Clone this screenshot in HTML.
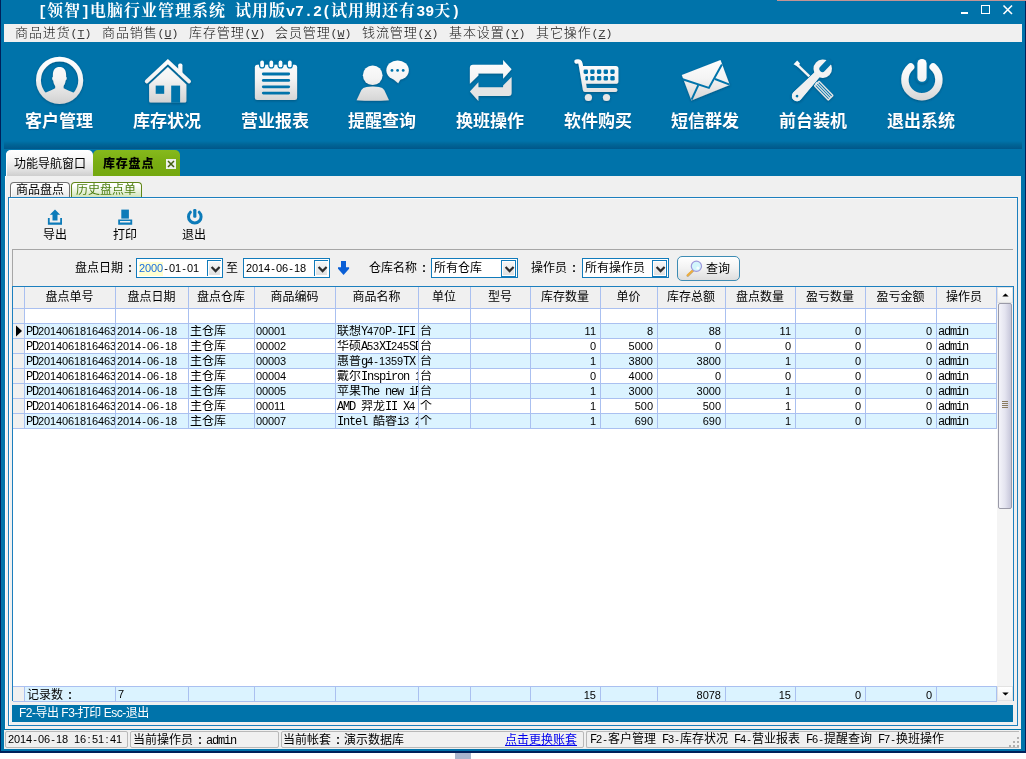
<!DOCTYPE html>
<html lang="zh-CN">
<head>
<meta charset="utf-8">
<title>[领智]电脑行业管理系统</title>
<style>
html,body{margin:0;padding:0;}
body{width:1026px;height:759px;overflow:hidden;background:#fff;position:relative;
  font-family:"Liberation Sans","Noto Sans CJK SC",sans-serif;font-size:12px;color:#000;line-height:1;}
.abs,#win div,#win svg,#menubar span{position:absolute;}
.c{padding:0 4px 0 5px;font-weight:bold;font-family:"Liberation Sans",sans-serif;letter-spacing:0}
#win{position:absolute;left:0;top:0;width:1026px;height:753px;background:#0073aa;overflow:hidden;will-change:transform;}
.t{white-space:nowrap;}
.mono{font-family:"Liberation Mono","Noto Sans CJK SC",monospace;font-size:12px;}
.l{font-family:"Liberation Mono",monospace;font-size:12px;letter-spacing:-1.2px;line-height:1px;}
.d{font-family:"Liberation Sans",sans-serif;font-size:11px;letter-spacing:-0.12px;line-height:1px;}
.p{padding:0 1.2px 0 1.26px;white-space:pre;}
.q{padding:0 1.5px 0 1.56px;white-space:pre;}
/* title */
#title{left:38px;top:1px;height:20px;line-height:20px;color:#fff;font-weight:bold;font-size:16px;letter-spacing:1px;
  font-family:"Liberation Serif","Noto Serif CJK SC",serif;}
#title i{font-style:normal;font-family:"Liberation Mono",monospace;font-size:15px;letter-spacing:0;}
/* menubar */
#menubar{left:4px;top:24px;width:1018px;height:18px;background:#f0f0f0;}
#menubar b{font-weight:normal;font-family:"Liberation Mono",monospace;font-size:11.5px;letter-spacing:0;color:#333}
#menubar span{top:0;height:18px;line-height:18px;font-size:13px;letter-spacing:0.9px;color:#111;white-space:nowrap;font-weight:300;}
/* toolbar */
.tbl{top:111px;width:108px;height:22px;line-height:22px;text-align:center;color:#fff;font-weight:bold;font-size:17px;
  font-family:"Liberation Sans","Noto Sans CJK SC",sans-serif;text-shadow:0 1px 1px rgba(0,40,80,.35);}
#shadow{left:4px;top:141px;width:1018px;height:8px;background:linear-gradient(#0073aa,#006698 40%,#00578a);}
/* content */
#content{left:4px;top:176px;width:1017px;height:553px;background:#f0f0f0;}
#statusbar{left:4px;top:730px;width:1017px;height:19px;background:#f0f0f0;}
.sp{top:1px;height:15px;border:1px solid #b8b8b8;border-radius:2px;line-height:15px;}
.hdr{height:21px;line-height:21px;text-align:center;}
.cell{height:15px;line-height:15px;white-space:nowrap;overflow:hidden;}
.num{text-align:right;font-size:11px;}
.ddb{width:13px;height:15px;border-left:1px solid #117bbb;border-top:1px solid #117bbb;background:#fff;}
.cb{border-right:1px solid #117bbb;border-bottom:1px solid #117bbb;}
.ddb i{position:absolute;left:1px;top:1px;width:11px;height:13px;background:linear-gradient(#f6f6f6,#e0e0e0);}
</style>
</head>
<body>
<div id="win">
  <div style="left:0;top:0;width:1px;height:753px;background:#00205a"></div>
  <div style="left:1025px;top:0;width:1px;height:753px;background:#00205a"></div>
  <div style="left:0;top:751px;width:1026px;height:2px;background:#00205a"></div>

  <div style="left:777px;top:0;width:249px;height:1px;background:#c29494"></div>
  <div id="title" class="t"><i>[</i>领智<i>]</i>电脑行业管理系统<i>&nbsp;</i>试用版<i>v7.2(</i>试用期还有<i>39</i>天<i>)</i></div>
  <!-- window buttons -->
  <div style="left:961px;top:12px;width:7px;height:2px;background:#fff"></div>
  <div style="left:981px;top:5px;width:7px;height:7px;border:1px solid #fff"></div>
  <svg style="left:1002px;top:4px" width="12" height="12" viewBox="0 0 12 12"><path d="M1.5 1.5 L10 10 M10 1.5 L1.5 10" stroke="#fff" stroke-width="1.6" fill="none"/></svg>

  <div id="menubar">
    <span style="left:11px">商品进货<b>(<u>T</u>)</b></span>
    <span style="left:98px">商品销售<b>(<u>U</u>)</b></span>
    <span style="left:185px">库存管理<b>(<u>V</u>)</b></span>
    <span style="left:271px">会员管理<b>(<u>W</u>)</b></span>
    <span style="left:358px">钱流管理<b>(<u>X</u>)</b></span>
    <span style="left:445px">基本设置<b>(<u>Y</u>)</b></span>
    <span style="left:532px">其它操作<b>(<u>Z</u>)</b></span>
  </div>

  <div id="shadow"></div>

  <svg style="left:0;top:0" width="1026" height="150" viewBox="0 0 1026 150">
  <defs>
    <linearGradient id="g" gradientUnits="userSpaceOnUse" x1="0" y1="58" x2="0" y2="103">
      <stop offset="0" stop-color="#ffffff"/><stop offset="0.45" stop-color="#f4f4f4"/><stop offset="1" stop-color="#d2d2d2"/>
    </linearGradient>
    <clipPath id="c1"><circle cx="59.6" cy="80.3" r="20"/></clipPath>
    <filter id="sh" x="-10%" y="-10%" width="120%" height="130%">
      <feDropShadow dx="0" dy="1" stdDeviation="0.8" flood-color="#003355" flood-opacity="0.45"/>
    </filter>
  </defs>
  <g filter="url(#sh)">
  <!-- 1 user -->
  <circle cx="59.6" cy="80.3" r="21.15" fill="none" stroke="url(#g)" stroke-width="4.9"/>
  <path clip-path="url(#c1)" fill="url(#g)" d="M52.9 75 C52.9 69.6 55.6 67 59.5 67 C63.4 67 66.1 69.6 66.1 75 L66.1 77 Q66.9 77.2 66.7 78.6 Q66.4 80.4 65.6 80.6 C65.2 83.4 64.4 85 63.6 86 L63.6 88.2 C66 89.6 70 91 75 93.2 L78 104 L41 104 L44.2 93.2 C49 91 53 89.6 55.2 88.2 L55.2 86 C54.4 85 53.6 83.4 53.2 80.6 Q52.4 80.4 52.2 78.6 Q52 77.2 52.9 77 Z"/>
  <!-- 2 house -->
  <rect x="178.2" y="63.6" width="4.2" height="11" rx="1.6" fill="url(#g)"/>
  <polyline points="146.8,81.4 167.9,61.6 189,81.4" fill="none" stroke="url(#g)" stroke-width="3.9" stroke-linecap="round" stroke-linejoin="miter"/>
  <path d="M149.1 84.5 L167.9 67 L186.4 84.5 L186.4 101 Q186.4 102.6 184.8 102.6 L150.7 102.6 Q149.1 102.6 149.1 101 Z" fill="url(#g)"/>
  <rect x="155.7" y="85.6" width="8.5" height="8.2" fill="#0073aa"/>
  <rect x="171.2" y="85.6" width="8.9" height="17.2" fill="#0073aa"/>
  <!-- 3 notepad -->
  <rect x="254.9" y="64.7" width="42.2" height="35.3" rx="2.5" fill="url(#g)"/>
  <g fill="#0073aa"><rect x="259.0" y="59.4" width="6.2" height="9.2" rx="3.1"/><rect x="268.2" y="59.4" width="6.2" height="9.2" rx="3.1"/><rect x="277.4" y="59.4" width="6.2" height="9.2" rx="3.1"/><rect x="286.7" y="59.4" width="6.2" height="9.2" rx="3.1"/></g>
  <g fill="#ffffff"><rect x="260.25" y="60.6" width="3.7" height="6.7" rx="1.85"/><rect x="269.45" y="60.6" width="3.7" height="6.7" rx="1.85"/><rect x="278.65" y="60.6" width="3.7" height="6.7" rx="1.85"/><rect x="287.95" y="60.6" width="3.7" height="6.7" rx="1.85"/></g>
  <g fill="#0073aa"><rect x="261.9" y="72.6" width="28.2" height="2.8" rx="1.4"/><rect x="261.9" y="79.0" width="28.2" height="2.8" rx="1.4"/><rect x="261.9" y="85.4" width="28.2" height="2.8" rx="1.4"/><rect x="261.9" y="91.7" width="28.2" height="2.8" rx="1.4"/></g>
  <!-- 4 remind -->
  <circle cx="372.7" cy="75.3" r="9.8" fill="url(#g)"/>
  <path d="M356.6 100.2 L361.4 90 Q362.8 87.6 366.6 87 Q372.8 85.8 379 87 Q382.8 87.6 384.2 90 L389 100.2 Q372.8 101.4 356.6 100.2 Z" fill="url(#g)"/>
  <ellipse cx="397.6" cy="70.2" rx="11.2" ry="9.8" fill="url(#g)"/>
  <polygon points="392.5,78.4 398.2,83.2 401.6,77.6" fill="url(#g)"/>
  <g fill="#0073aa"><circle cx="392" cy="70.4" r="1.4"/><circle cx="397.6" cy="70.4" r="1.4"/><circle cx="403.2" cy="70.4" r="1.4"/></g>
  <!-- 5 swap -->
  <path fill="url(#g)" d="M469.9 83.8 L469.9 67.8 Q469.9 64.8 472.9 64.8 L503.1 64.8 L503.1 60 L511.6 69.3 L503.1 78.7 L503.1 73.6 L478.4 73.6 L478.4 75.5 Z"/>
  <path fill="#e4e4e4" transform="rotate(180 490.75 80.45)" d="M469.9 83.8 L469.9 67.8 Q469.9 64.8 472.9 64.8 L503.1 64.8 L503.1 60 L511.6 69.3 L503.1 78.7 L503.1 73.6 L478.4 73.6 L478.4 75.5 Z"/>
  <!-- 6 cart -->
  <path fill="none" stroke="url(#g)" stroke-width="4.2" stroke-linecap="round" stroke-linejoin="round" d="M576.4 61.6 Q580 60.4 580.6 64 L585 90 L615.4 90"/>
  <path fill="url(#g)" d="M581.6 66 L615.8 66 Q618.4 66 618.4 68.6 L618.4 81.2 Q618.4 83.8 615.8 83.8 L584.4 83.8 Z"/>
  <g fill="#0073aa"><rect x="583.6" y="69.5" width="4.4" height="4.4" rx="1.3"/><rect x="590.2" y="69.5" width="4.4" height="4.4" rx="1.3"/><rect x="596.9" y="69.5" width="4.4" height="4.4" rx="1.3"/><rect x="603.6" y="69.5" width="4.4" height="4.4" rx="1.3"/><rect x="610.3" y="69.5" width="4.4" height="4.4" rx="1.3"/><rect x="585.4" y="76.1" width="2.6" height="4.4" rx="1.3"/><rect x="590.2" y="76.1" width="4.4" height="4.4" rx="1.3"/><rect x="596.9" y="76.1" width="4.4" height="4.4" rx="1.3"/><rect x="603.6" y="76.1" width="4.4" height="4.4" rx="1.3"/><rect x="610.3" y="76.1" width="4.4" height="4.4" rx="1.3"/></g>
  <circle cx="588.4" cy="97.5" r="3.6" fill="#e6e6e6"/><circle cx="606.5" cy="97.5" r="3.6" fill="#e6e6e6"/>
  <!-- 7 envelope -->
  <polygon points="681.8,74.9 720.5,60.1 729.8,85.1 691.4,100.5" fill="url(#g)"/>
  <polyline points="682.6,79.2 708.9,87.9 721.9,64.4" fill="none" stroke="#0073aa" stroke-width="2"/>
  <polyline points="698.3,85.1 691.6,99.6" fill="none" stroke="#0073aa" stroke-width="2"/>
  <polyline points="715,79 729.6,84.6" fill="none" stroke="#0073aa" stroke-width="2"/>
  <!-- 8 tools -->
  <g>
    <polygon points="793.6,64.2 797.2,60.6 800,63.6 798,66.8" fill="#fbfbfb"/>
    <line x1="797.4" y1="64.8" x2="816.4" y2="83.2" stroke="#f6f6f6" stroke-width="2.3"/>
    <g transform="translate(823.7 90.65) rotate(46)">
      <rect x="-10.6" y="-3.9" width="21.2" height="7.8" rx="1" fill="#e6e6e6"/>
      <rect x="-9.2" y="-2.55" width="18.4" height="0.95" fill="#0073aa"/>
      <rect x="-9.2" y="-0.48" width="18.4" height="0.95" fill="#0073aa"/>
      <rect x="-9.2" y="1.6" width="18.4" height="0.95" fill="#0073aa"/>
    </g>
    <g transform="translate(797 96.1) rotate(-46.8)">
      <path d="M0 -5.1 L30 -3.4 L30 3.4 L0 5.1 A5.1 5.1 0 0 1 0 -5.1 Z" fill="#efefef" stroke="#0073aa" stroke-width="1.4" paint-order="stroke"/>
      <circle cx="37.6" cy="0" r="9.2" fill="#f3f3f3"/>
      <path d="M0 -5.1 L30 -3.4 L30 3.4 L0 5.1 A5.1 5.1 0 0 1 0 -5.1 Z" fill="#efefef"/>
      <path d="M37.2 -3.1 L49 -3.1 L49 3.1 L37.2 3.1 A3.1 3.1 0 0 1 37.2 -3.1 Z" fill="#0073aa"/>
      <circle cx="0" cy="0" r="1.35" fill="#0073aa"/>
    </g>
  </g>
  <!-- 9 power -->
  <path d="M910.6 67 A17 17 0 1 0 933.2 67" fill="none" stroke="url(#g)" stroke-width="7.4" stroke-linecap="round"/>
  <rect x="915.8" y="57.4" width="12.4" height="26" rx="6" fill="#0073aa"/>
  <rect x="917.4" y="59" width="9.2" height="22.8" rx="4.4" fill="url(#g)"/>
  </g>
</svg>


  <div class="tbl" style="left:5px">客户管理</div>
  <div class="tbl" style="left:113px">库存状况</div>
  <div class="tbl" style="left:221px">营业报表</div>
  <div class="tbl" style="left:328px">提醒查询</div>
  <div class="tbl" style="left:436px">换班操作</div>
  <div class="tbl" style="left:544px">软件购买</div>
  <div class="tbl" style="left:651px">短信群发</div>
  <div class="tbl" style="left:759px">前台装机</div>
  <div class="tbl" style="left:867px">退出系统</div>

    <div style="left:6px;top:150px;width:87px;height:26px;border-radius:5px 5px 0 0;background:linear-gradient(#ffffff,#f5f5f5 40%,#e2e2e2 75%,#cecece);box-shadow:inset 1px 0 0 #fff"></div>
  <div class="t" style="left:14px;top:157px;height:14px;line-height:14px;font-size:12px">功能导航窗口</div>
  <div style="left:93px;top:150px;width:87px;height:26px;border-radius:5px 5px 0 0;background:linear-gradient(#86b91c,#79ad12 50%,#74a810)"></div>
  <div class="t" style="left:103px;top:157px;height:14px;line-height:14px;font-size:12px;font-weight:900;letter-spacing:0.8px">库存盘点</div>
  <div style="left:166px;top:159px;width:10px;height:10px;background:#eef1ea"></div>
  <svg style="left:166px;top:159px" width="10" height="10" viewBox="0 0 10 10"><path d="M2 2 L8 8 M8 2 L2 8" stroke="#44600f" stroke-width="1.5" fill="none"/></svg>


  <div id="content">
      <div style="left:0;top:0;width:1px;height:553px;background:#0073aa"></div>
    <div style="left:1px;top:0;width:1px;height:553px;background:#fafafa"></div>
    <!-- sub tabs -->
    <div style="left:6px;top:6px;width:58px;height:16px;border:1px solid #707070;border-bottom:none;border-radius:4px 4px 0 0;background:linear-gradient(#ffffff,#f4f4f4 50%,#e4e4e4);box-shadow:inset 1px 1px 0 #fff"></div>
    <div class="t" style="left:12px;top:7px;height:14px;line-height:14px">商品盘点</div>
    <div style="left:67px;top:6px;width:69px;height:15px;border:1px solid #5f8516;border-bottom:none;border-radius:4px 4px 0 0;background:linear-gradient(#ffffff 15%,#e6f1d8 60%,#cfe4b4)"></div>
    <div class="t" style="left:72px;top:7px;height:14px;line-height:14px;color:#4c7d10">历史盘点单</div>
    <!-- panel -->
    <div style="left:4px;top:21px;width:1008px;height:527px;border:1px solid #1c7fbe;background:#f0f0f0;box-shadow:inset 1px 1px 0 #fbfbfb"></div>
    <!-- inner toolbar -->
    <svg style="left:40px;top:32px" width="180" height="18" viewBox="40 32 180 18">
      <g fill="#0c7bb9">
        <!-- export -->
        <path d="M51 33.4 L56.2 38.8 L53.5 38.8 L53.5 44.6 L48.5 44.6 L48.5 38.8 L45.8 38.8 Z"/>
        <path d="M43.9 42 L45.7 42 L45.7 46.4 L56.2 46.4 L56.2 42 L58 42 L58 48.7 L43.9 48.7 Z"/>
        <!-- print -->
        <rect x="117.3" y="33.6" width="7.6" height="9"/>
        <path d="M114.2 43.4 L128.2 43.4 L128.2 48.8 L114.2 48.8 Z M116 45 L116 46.6 L126.4 46.6 L126.4 45 Z" fill-rule="evenodd"/>
        <!-- exit -->
        <rect x="189.2" y="33" width="3.2" height="8.8" rx="1.2"/>
      </g>
      <path d="M186.4 36.2 A6.3 6.3 0 1 0 195.2 36.2" fill="none" stroke="#0c7bb9" stroke-width="3" stroke-linecap="round"/>
    </svg>
    <div class="t" style="left:39px;top:52px;height:14px;line-height:14px">导出</div>
    <div class="t" style="left:109px;top:52px;height:14px;line-height:14px">打印</div>
    <div class="t" style="left:178px;top:52px;height:14px;line-height:14px">退出</div>
    <!-- filter panel -->
    <div style="left:8px;top:73px;width:1001px;height:38px;border-top:1px solid #a6a6a6;border-left:1px solid #a6a6a6;box-sizing:border-box"></div>
    <div class="t" style="left:71px;top:85px;height:14px;line-height:14px">盘点日期<span class="c">:</span></div>
    <div style="left:132px;top:82px;width:85px;height:18px;border:1px solid #117bbb;background:#fff"></div>
    <div class="t mono" style="left:135px;top:86px;height:14px;line-height:14px"><span style="background:#ffffd0;color:#1a6ee0"><span class="d">2000</span></span><span class="d p">-</span><span class="d">01</span><span class="d p">-</span><span class="d">01</span></div>
    <div class="ddb" style="left:203px;top:84px"><i></i><svg style="left:0;top:0" width="14" height="16" viewBox="0 0 14 16"><path d="M3.6 6 L7.6 10.1 L11.6 6" stroke="#2c2c2c" stroke-width="2.2" fill="none"/></svg></div>
    <div class="t" style="left:222px;top:85px;height:14px;line-height:14px">至</div>
    <div style="left:239px;top:82px;width:85px;height:18px;border:1px solid #117bbb;background:#fff"></div>
    <div class="t mono" style="left:242px;top:86px;height:14px;line-height:14px"><span class="d">2014</span><span class="d p">-</span><span class="d">06</span><span class="d p">-</span><span class="d">18</span></div>
    <div class="ddb" style="left:310px;top:84px"><i></i><svg style="left:0;top:0" width="14" height="16" viewBox="0 0 14 16"><path d="M3.6 6 L7.6 10.1 L11.6 6" stroke="#2c2c2c" stroke-width="2.2" fill="none"/></svg></div>
    <svg style="left:333px;top:85px" width="13" height="15" viewBox="0 0 13 15"><path d="M4 0 L9 0 L9 6.2 L12.1 6.2 L12.1 7.8 L6.55 14 L1 7.8 L1 6.2 L4 6.2 Z" fill="#0a5fd6"/></svg>
    <div class="t" style="left:365px;top:85px;height:14px;line-height:14px">仓库名称<span class="c">:</span></div>
    <div style="left:427px;top:82px;width:85px;height:18px;border:1px solid #117bbb;background:#fff"></div>
    <div class="t" style="left:430px;top:85px;height:14px;line-height:14px">所有仓库</div>
    <div class="ddb cb" style="left:497px;top:84px"><i></i><svg style="left:0;top:0" width="14" height="16" viewBox="0 0 14 16"><path d="M3.6 6 L7.6 10.1 L11.6 6" stroke="#2c2c2c" stroke-width="2.2" fill="none"/></svg></div>
    <div class="t" style="left:527px;top:85px;height:14px;line-height:14px">操作员<span class="c">:</span></div>
    <div style="left:578px;top:82px;width:85px;height:18px;border:1px solid #117bbb;background:#fff"></div>
    <div class="t" style="left:581px;top:85px;height:14px;line-height:14px">所有操作员</div>
    <div class="ddb cb" style="left:648px;top:84px"><i></i><svg style="left:0;top:0" width="14" height="16" viewBox="0 0 14 16"><path d="M3.6 6 L7.6 10.1 L11.6 6" stroke="#2c2c2c" stroke-width="2.2" fill="none"/></svg></div>
    <!-- query button -->
    <div style="left:673px;top:80px;width:61px;height:23px;border:1px solid #3d8cb4;border-radius:5px;background:linear-gradient(#ffffff,#f2f2f2 50%,#dedede)"></div>
    <svg style="left:681px;top:83px" width="18" height="18" viewBox="0 0 18 18">
      <path d="M8.2 11.4 L2.8 16.6" stroke="#8a6a30" stroke-width="2.6" stroke-linecap="round" opacity="0.5"/>
      <path d="M8 11.2 L2.6 16.2" stroke="#efae3c" stroke-width="1.9" stroke-linecap="round"/>
      <circle cx="11.4" cy="7.3" r="5.1" fill="#d2f5fc" stroke="#9c98dc" stroke-width="1.2"/>
      <circle cx="12.8" cy="9" r="1.5" fill="#ffffff" opacity="0.8"/>
    </svg>
    <div class="t" style="left:702px;top:86px;height:14px;line-height:14px">查询</div>
    <div style="left:8px;top:110px;width:1002px;height:415px;background:#fff;border:1px solid #1c7fbe;box-sizing:border-box"></div>
<div style="left:9px;top:111px;width:984px;height:21px;background:#f0f0f0"></div>
<div style="left:9px;top:111px;width:11px;height:141px;background:#f0f0f0"></div>
<div style="left:21px;top:147px;width:972px;height:15px;background:#dbf3ff"></div>
<div style="left:21px;top:177px;width:972px;height:15px;background:#dbf3ff"></div>
<div style="left:21px;top:207px;width:972px;height:15px;background:#dbf3ff"></div>
<div style="left:21px;top:237px;width:972px;height:15px;background:#dbf3ff"></div>
<div style="left:9px;top:510px;width:984px;height:14px;background:#dbf3ff;border-top:1px solid #aac0f0;border-bottom:1px solid #aac0f0"></div>
<div style="left:9px;top:511px;width:11px;height:14px;background:#f0f0f0"></div>
<div style="left:9px;top:132px;width:984px;height:1px;background:#aac0f0"></div>
<div style="left:9px;top:147px;width:984px;height:1px;background:#aac0f0"></div>
<div style="left:9px;top:162px;width:984px;height:1px;background:#aac0f0"></div>
<div style="left:9px;top:177px;width:984px;height:1px;background:#aac0f0"></div>
<div style="left:9px;top:192px;width:984px;height:1px;background:#aac0f0"></div>
<div style="left:9px;top:207px;width:984px;height:1px;background:#aac0f0"></div>
<div style="left:9px;top:222px;width:984px;height:1px;background:#aac0f0"></div>
<div style="left:9px;top:237px;width:984px;height:1px;background:#aac0f0"></div>
<div style="left:9px;top:252px;width:984px;height:1px;background:#aac0f0"></div>
<div style="left:20px;top:111px;width:1px;height:142px;background:#aac0f0"></div>
<div style="left:20px;top:511px;width:1px;height:14px;background:#aac0f0"></div>
<div style="left:111px;top:111px;width:1px;height:142px;background:#aac0f0"></div>
<div style="left:111px;top:511px;width:1px;height:14px;background:#aac0f0"></div>
<div style="left:184px;top:111px;width:1px;height:142px;background:#aac0f0"></div>
<div style="left:184px;top:511px;width:1px;height:14px;background:#aac0f0"></div>
<div style="left:250px;top:111px;width:1px;height:142px;background:#aac0f0"></div>
<div style="left:250px;top:511px;width:1px;height:14px;background:#aac0f0"></div>
<div style="left:331px;top:111px;width:1px;height:142px;background:#aac0f0"></div>
<div style="left:331px;top:511px;width:1px;height:14px;background:#aac0f0"></div>
<div style="left:414px;top:111px;width:1px;height:142px;background:#aac0f0"></div>
<div style="left:414px;top:511px;width:1px;height:14px;background:#aac0f0"></div>
<div style="left:466px;top:111px;width:1px;height:142px;background:#aac0f0"></div>
<div style="left:466px;top:511px;width:1px;height:14px;background:#aac0f0"></div>
<div style="left:526px;top:111px;width:1px;height:142px;background:#aac0f0"></div>
<div style="left:526px;top:511px;width:1px;height:14px;background:#aac0f0"></div>
<div style="left:596px;top:111px;width:1px;height:142px;background:#aac0f0"></div>
<div style="left:596px;top:511px;width:1px;height:14px;background:#aac0f0"></div>
<div style="left:653px;top:111px;width:1px;height:142px;background:#aac0f0"></div>
<div style="left:653px;top:511px;width:1px;height:14px;background:#aac0f0"></div>
<div style="left:721px;top:111px;width:1px;height:142px;background:#aac0f0"></div>
<div style="left:721px;top:511px;width:1px;height:14px;background:#aac0f0"></div>
<div style="left:791px;top:111px;width:1px;height:142px;background:#aac0f0"></div>
<div style="left:791px;top:511px;width:1px;height:14px;background:#aac0f0"></div>
<div style="left:861px;top:111px;width:1px;height:142px;background:#aac0f0"></div>
<div style="left:861px;top:511px;width:1px;height:14px;background:#aac0f0"></div>
<div style="left:932px;top:111px;width:1px;height:142px;background:#aac0f0"></div>
<div style="left:932px;top:511px;width:1px;height:14px;background:#aac0f0"></div>
<div style="left:992px;top:111px;width:1px;height:142px;background:#aac0f0"></div>
<div style="left:992px;top:511px;width:1px;height:14px;background:#aac0f0"></div>
<div class="hdr t" style="left:20px;width:91px;top:111px">盘点单号</div>
<div class="hdr t" style="left:111px;width:73px;top:111px">盘点日期</div>
<div class="hdr t" style="left:184px;width:66px;top:111px">盘点仓库</div>
<div class="hdr t" style="left:250px;width:81px;top:111px">商品编码</div>
<div class="hdr t" style="left:331px;width:83px;top:111px">商品名称</div>
<div class="hdr t" style="left:414px;width:52px;top:111px">单位</div>
<div class="hdr t" style="left:466px;width:60px;top:111px">型号</div>
<div class="hdr t" style="left:526px;width:70px;top:111px">库存数量</div>
<div class="hdr t" style="left:596px;width:57px;top:111px">单价</div>
<div class="hdr t" style="left:653px;width:68px;top:111px">库存总额</div>
<div class="hdr t" style="left:721px;width:70px;top:111px">盘点数量</div>
<div class="hdr t" style="left:791px;width:70px;top:111px">盈亏数量</div>
<div class="hdr t" style="left:861px;width:71px;top:111px">盈亏金额</div>
<div class="hdr t" style="left:930px;width:60px;top:111px">操作员</div>
<div class="cell mono" style="left:22px;width:89px;top:149px"><span class="l">PD</span><span class="d">201406181646381</span></div>
<div class="cell mono" style="left:113px;width:71px;top:149px"><span class="d">2014</span><span class="d p">-</span><span class="d">06</span><span class="d p">-</span><span class="d">18</span></div>
<div class="cell mono" style="left:186px;width:64px;top:149px">主仓库</div>
<div class="cell mono" style="left:252px;width:79px;top:149px"><span class="d">00001</span></div>
<div class="cell mono" style="left:333px;width:81px;top:149px">联想<span class="l">Y</span><span class="d">470</span><span class="l">P</span><span class="d p">-</span><span class="l">IFI</span></div>
<div class="cell mono" style="left:416px;width:50px;top:149px">台</div>
<div class="cell num" style="left:527px;width:65px;top:148px">11</div>
<div class="cell num" style="left:597px;width:52px;top:148px">8</div>
<div class="cell num" style="left:654px;width:63px;top:148px">88</div>
<div class="cell num" style="left:722px;width:65px;top:148px">11</div>
<div class="cell num" style="left:792px;width:65px;top:148px">0</div>
<div class="cell num" style="left:862px;width:66px;top:148px">0</div>
<div class="cell mono" style="left:934px;width:58px;top:149px"><span class="l">admin</span></div>
<div class="cell mono" style="left:22px;width:89px;top:164px"><span class="l">PD</span><span class="d">201406181646381</span></div>
<div class="cell mono" style="left:113px;width:71px;top:164px"><span class="d">2014</span><span class="d p">-</span><span class="d">06</span><span class="d p">-</span><span class="d">18</span></div>
<div class="cell mono" style="left:186px;width:64px;top:164px">主仓库</div>
<div class="cell mono" style="left:252px;width:79px;top:164px"><span class="d">00002</span></div>
<div class="cell mono" style="left:333px;width:81px;top:164px">华硕<span class="l">A</span><span class="d">53</span><span class="l">XI</span><span class="d">245</span><span class="l">SD</span></div>
<div class="cell mono" style="left:416px;width:50px;top:164px">台</div>
<div class="cell num" style="left:527px;width:65px;top:163px">0</div>
<div class="cell num" style="left:597px;width:52px;top:163px">5000</div>
<div class="cell num" style="left:654px;width:63px;top:163px">0</div>
<div class="cell num" style="left:722px;width:65px;top:163px">0</div>
<div class="cell num" style="left:792px;width:65px;top:163px">0</div>
<div class="cell num" style="left:862px;width:66px;top:163px">0</div>
<div class="cell mono" style="left:934px;width:58px;top:164px"><span class="l">admin</span></div>
<div class="cell mono" style="left:22px;width:89px;top:179px"><span class="l">PD</span><span class="d">201406181646381</span></div>
<div class="cell mono" style="left:113px;width:71px;top:179px"><span class="d">2014</span><span class="d p">-</span><span class="d">06</span><span class="d p">-</span><span class="d">18</span></div>
<div class="cell mono" style="left:186px;width:64px;top:179px">主仓库</div>
<div class="cell mono" style="left:252px;width:79px;top:179px"><span class="d">00003</span></div>
<div class="cell mono" style="left:333px;width:81px;top:179px">惠普<span class="l">g</span><span class="d">4</span><span class="d p">-</span><span class="d">1359</span><span class="l">TX</span></div>
<div class="cell mono" style="left:416px;width:50px;top:179px">台</div>
<div class="cell num" style="left:527px;width:65px;top:178px">1</div>
<div class="cell num" style="left:597px;width:52px;top:178px">3800</div>
<div class="cell num" style="left:654px;width:63px;top:178px">3800</div>
<div class="cell num" style="left:722px;width:65px;top:178px">1</div>
<div class="cell num" style="left:792px;width:65px;top:178px">0</div>
<div class="cell num" style="left:862px;width:66px;top:178px">0</div>
<div class="cell mono" style="left:934px;width:58px;top:179px"><span class="l">admin</span></div>
<div class="cell mono" style="left:22px;width:89px;top:194px"><span class="l">PD</span><span class="d">201406181646381</span></div>
<div class="cell mono" style="left:113px;width:71px;top:194px"><span class="d">2014</span><span class="d p">-</span><span class="d">06</span><span class="d p">-</span><span class="d">18</span></div>
<div class="cell mono" style="left:186px;width:64px;top:194px">主仓库</div>
<div class="cell mono" style="left:252px;width:79px;top:194px"><span class="d">00004</span></div>
<div class="cell mono" style="left:333px;width:81px;top:194px">戴尔<span class="l">Inspiron</span><span class="d q"> </span><span class="d">14</span></div>
<div class="cell mono" style="left:416px;width:50px;top:194px">台</div>
<div class="cell num" style="left:527px;width:65px;top:193px">0</div>
<div class="cell num" style="left:597px;width:52px;top:193px">4000</div>
<div class="cell num" style="left:654px;width:63px;top:193px">0</div>
<div class="cell num" style="left:722px;width:65px;top:193px">0</div>
<div class="cell num" style="left:792px;width:65px;top:193px">0</div>
<div class="cell num" style="left:862px;width:66px;top:193px">0</div>
<div class="cell mono" style="left:934px;width:58px;top:194px"><span class="l">admin</span></div>
<div class="cell mono" style="left:22px;width:89px;top:209px"><span class="l">PD</span><span class="d">201406181646381</span></div>
<div class="cell mono" style="left:113px;width:71px;top:209px"><span class="d">2014</span><span class="d p">-</span><span class="d">06</span><span class="d p">-</span><span class="d">18</span></div>
<div class="cell mono" style="left:186px;width:64px;top:209px">主仓库</div>
<div class="cell mono" style="left:252px;width:79px;top:209px"><span class="d">00005</span></div>
<div class="cell mono" style="left:333px;width:81px;top:209px">苹果<span class="l">The</span><span class="d q"> </span><span class="l">new</span><span class="d q"> </span><span class="l">iPad</span></div>
<div class="cell mono" style="left:416px;width:50px;top:209px">台</div>
<div class="cell num" style="left:527px;width:65px;top:208px">1</div>
<div class="cell num" style="left:597px;width:52px;top:208px">3000</div>
<div class="cell num" style="left:654px;width:63px;top:208px">3000</div>
<div class="cell num" style="left:722px;width:65px;top:208px">1</div>
<div class="cell num" style="left:792px;width:65px;top:208px">0</div>
<div class="cell num" style="left:862px;width:66px;top:208px">0</div>
<div class="cell mono" style="left:934px;width:58px;top:209px"><span class="l">admin</span></div>
<div class="cell mono" style="left:22px;width:89px;top:224px"><span class="l">PD</span><span class="d">201406181646381</span></div>
<div class="cell mono" style="left:113px;width:71px;top:224px"><span class="d">2014</span><span class="d p">-</span><span class="d">06</span><span class="d p">-</span><span class="d">18</span></div>
<div class="cell mono" style="left:186px;width:64px;top:224px">主仓库</div>
<div class="cell mono" style="left:252px;width:79px;top:224px"><span class="d">00011</span></div>
<div class="cell mono" style="left:333px;width:81px;top:224px"><span class="l">AMD</span><span class="d q"> </span>羿龙<span class="l">II</span><span class="d q"> </span><span class="l">X</span><span class="d">4</span><span class="d q"> </span><span class="d">955</span></div>
<div class="cell mono" style="left:416px;width:50px;top:224px">个</div>
<div class="cell num" style="left:527px;width:65px;top:223px">1</div>
<div class="cell num" style="left:597px;width:52px;top:223px">500</div>
<div class="cell num" style="left:654px;width:63px;top:223px">500</div>
<div class="cell num" style="left:722px;width:65px;top:223px">1</div>
<div class="cell num" style="left:792px;width:65px;top:223px">0</div>
<div class="cell num" style="left:862px;width:66px;top:223px">0</div>
<div class="cell mono" style="left:934px;width:58px;top:224px"><span class="l">admin</span></div>
<div class="cell mono" style="left:22px;width:89px;top:239px"><span class="l">PD</span><span class="d">201406181646381</span></div>
<div class="cell mono" style="left:113px;width:71px;top:239px"><span class="d">2014</span><span class="d p">-</span><span class="d">06</span><span class="d p">-</span><span class="d">18</span></div>
<div class="cell mono" style="left:186px;width:64px;top:239px">主仓库</div>
<div class="cell mono" style="left:252px;width:79px;top:239px"><span class="d">00007</span></div>
<div class="cell mono" style="left:333px;width:81px;top:239px"><span class="l">Intel</span><span class="d q"> </span>酷睿<span class="l">i</span><span class="d">3</span><span class="d q"> </span><span class="d">2100</span></div>
<div class="cell mono" style="left:416px;width:50px;top:239px">个</div>
<div class="cell num" style="left:527px;width:65px;top:238px">1</div>
<div class="cell num" style="left:597px;width:52px;top:238px">690</div>
<div class="cell num" style="left:654px;width:63px;top:238px">690</div>
<div class="cell num" style="left:722px;width:65px;top:238px">1</div>
<div class="cell num" style="left:792px;width:65px;top:238px">0</div>
<div class="cell num" style="left:862px;width:66px;top:238px">0</div>
<div class="cell mono" style="left:934px;width:58px;top:239px"><span class="l">admin</span></div>
<svg style="left:11px;top:149px" width="8" height="12" viewBox="0 0 8 12"><path d="M1 0.5 L7 6 L1 11.5 Z" fill="#000"/></svg>
<div class="cell mono" style="left:23px;width:88px;top:512px">记录数<span class="c">:</span></div>
<div class="cell mono" style="left:114px;width:70px;top:512px"><span class="d">7</span></div>
<div class="cell num" style="left:527px;width:65px;top:512px">15</div>
<div class="cell num" style="left:654px;width:63px;top:512px">8078</div>
<div class="cell num" style="left:722px;width:65px;top:512px">15</div>
<div class="cell num" style="left:792px;width:65px;top:512px">0</div>
<div class="cell num" style="left:862px;width:66px;top:512px">0</div>
    <!-- scrollbar -->
    <div style="left:993px;top:111px;width:16px;height:414px;background:#f4f4f4"></div>
    <div style="left:993px;top:111px;width:16px;height:16px;box-sizing:border-box;border:1px solid #e2e2e2;background:linear-gradient(#ffffff,#f0f0f0)"></div>
    <svg style="left:998px;top:117px" width="7" height="4" viewBox="0 0 8 5"><path d="M0 4.5 L4 0.5 L8 4.5 Z" fill="#000"/></svg>
    <div style="left:994px;top:127px;width:14px;height:206px;border:1px solid #9a9aa8;border-radius:2px;box-sizing:border-box;background:linear-gradient(90deg,#f4f4fa,#e4e4f0 50%,#c6c6da)"></div>
    <div style="left:998px;top:225px;width:6px;height:1px;background:#8a7a60;box-shadow:0 2px 0 #8a7a60,0 4px 0 #8a7a60,0 6px 0 #8a7a60"></div>
    <div style="left:993px;top:510px;width:16px;height:15px;box-sizing:border-box;border:1px solid #e2e2e2;background:linear-gradient(#ffffff,#f0f0f0)"></div>
    <svg style="left:998px;top:516px" width="7" height="4" viewBox="0 0 8 5"><path d="M0 0.5 L4 4.5 L8 0.5 Z" fill="#000"/></svg>
    <!-- bottom blue bar -->
    <div style="left:8px;top:529px;width:1001px;height:17px;background:#0073aa"></div>
    <div class="t" style="left:15px;top:530px;height:15px;line-height:15px;color:#fff;font-size:12px;letter-spacing:-0.5px">F2-导出 F3-打印 Esc-退出</div>

  </div>

  <div style="left:4px;top:729px;width:1017px;height:1px;background:#0073aa"></div>
  <div id="statusbar">
      <div class="sp" style="left:1px;width:121px"></div>
    <div class="t mono" style="left:4px;top:3px;height:14px;line-height:14px"><span class="d">2014</span><span class="d p">-</span><span class="d">06</span><span class="d p">-</span><span class="d">18</span><span class="d q"> </span><span class="d">16</span><span class="d q">:</span><span class="d">51</span><span class="d q">:</span><span class="d">41</span></div>
    <div class="sp" style="left:126px;width:147px"></div>
    <div class="t mono" style="left:129px;top:3px;height:14px;line-height:14px">当前操作员<span class="c">:</span><span class="l">admin</span></div>
    <div class="sp" style="left:277px;width:301px"></div>
    <div class="t" style="left:279px;top:3px;height:14px;line-height:14px">当前帐套<span class="c">:</span>演示数据库</div>
    <div class="t" style="left:501px;top:3px;height:14px;line-height:14px;color:#0000ee;text-decoration:underline">点击更换账套</div>
    <div class="sp" style="left:582px;width:432px;border-right:none;border-radius:2px 0 0 2px"></div>
    <div class="t mono" style="left:586px;top:3px;height:14px;line-height:14px"><span class="l">F</span><span class="d">2</span><span class="d p">-</span>客户管理<span class="d q"> </span><span class="l">F</span><span class="d">3</span><span class="d p">-</span>库存状况<span class="d q"> </span><span class="l">F</span><span class="d">4</span><span class="d p">-</span>营业报表<span class="d q"> </span><span class="l">F</span><span class="d">6</span><span class="d p">-</span>提醒查询<span class="d q"> </span><span class="l">F</span><span class="d">7</span><span class="d p">-</span>换班操作</div>
    <svg style="left:1004px;top:6px" width="12" height="12" viewBox="0 0 12 12"><g fill="#b0b0b0"><rect x="9" y="1" width="2" height="2"/><rect x="5" y="5" width="2" height="2"/><rect x="9" y="5" width="2" height="2"/><rect x="1" y="9" width="2" height="2"/><rect x="5" y="9" width="2" height="2"/><rect x="9" y="9" width="2" height="2"/></g></svg>

  </div>
</div>
<div class="abs" style="left:455px;top:753px;width:16px;height:6px;background:#a9b5cd"></div>
</body>
</html>
